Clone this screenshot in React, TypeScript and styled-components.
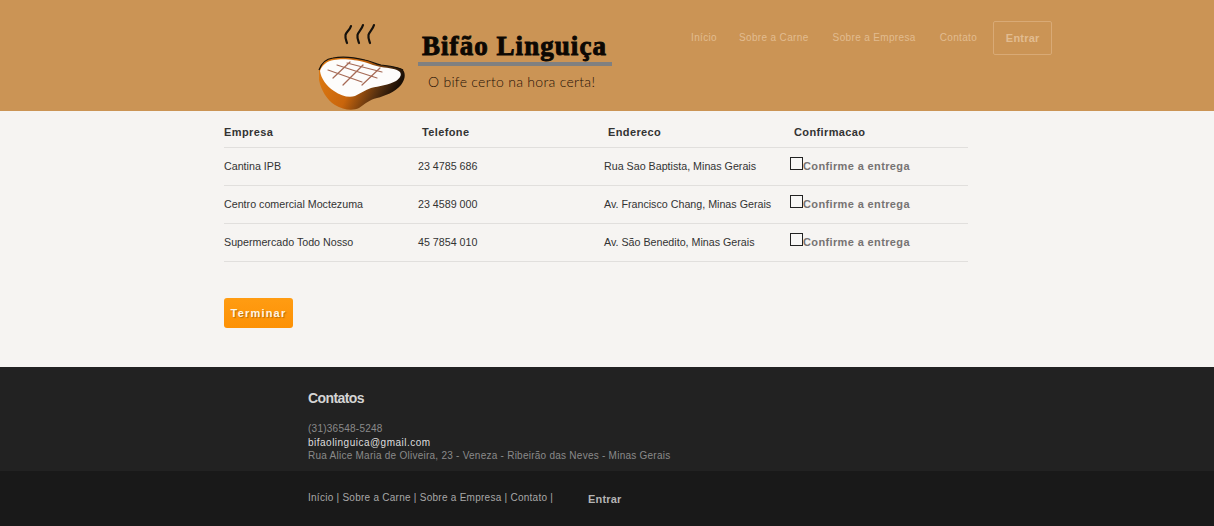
import React from 'react';
import styled, { createGlobalStyle } from 'styled-components';

const GlobalStyle = createGlobalStyle`
  html, body {
    margin: 0;
    padding: 0;
    background: #f6f4f2;
    font-family: "Liberation Sans", Arial, sans-serif;
  }
`;

const Header = styled.header`
  display: flex;
  align-items: flex-start;
  height: 111px;
  padding-left: 315px;
  background: #cb9455;
  overflow: hidden;
`;

const Logo = styled.div`
  display: flex;
  width: 297px;
`;

const SteakIcon = styled.svg`
  flex: none;
  width: 100px;
  height: 92px;
  margin-top: 20px;
`;

const Brand = styled.div`
  display: flex;
  flex-direction: column;
  margin: 31px 0 0 3px;
  width: 194px;
`;

const BrandName = styled.div`
  padding-left: 4px;
  font-family: "Liberation Serif", "Times New Roman", serif;
  font-size: 27px;
  line-height: 30px;
  font-weight: 700;
  letter-spacing: 1.05px;
  white-space: nowrap;
  color: #0c0803;
  -webkit-text-stroke: 0.9px #0c0803;
`;

const BrandBar = styled.div`
  height: 4px;
  margin-top: 1px;
  background: #808080;
`;

const Tagline = styled.div`
  margin-top: 7px;
  padding-left: 10px;
  font-family: Lato, sans-serif;
  font-size: 14px;
  font-weight: 300;
  line-height: 17px;
  letter-spacing: 0.29px;
  white-space: nowrap;
  color: #1f1005;
`;

const Nav = styled.nav`
  display: flex;
  align-items: flex-start;
  margin: 21px 0 0 77px;
`;

const NavLink = styled.a`
  margin: 10px 24px 0 0;
  font-size: 10px;
  line-height: 13px;
  letter-spacing: 0.35px;
  white-space: nowrap;
  color: #e2bc90;

  &:first-child {
    margin: 10px 22px 0 2px;
  }
`;

const EnterButton = styled.a`
  box-sizing: border-box;
  width: 59px;
  height: 34px;
  margin-left: -8px;
  border: 1px solid #d9aa76;
  border-radius: 2px;
  font-size: 11px;
  font-weight: 700;
  line-height: 32px;
  letter-spacing: 0.2px;
  text-align: center;
  color: #e2bc90;
`;

const Main = styled.main`
  height: 256px;
  padding-left: 224px;
  background: #f6f4f2;
`;

const Table = styled.table`
  width: 744px;
  border-collapse: collapse;
  table-layout: fixed;
`;

const HeadCell = styled.th<{ $indent?: boolean; $width: number }>`
  width: ${(p) => p.$width}px;
  height: 36px;
  padding: 6px 0 0 ${(p) => (p.$indent ? 4 : 0)}px;
  box-sizing: border-box;
  border-bottom: 1px solid #e1dfdd;
  font-size: 11px;
  font-weight: 700;
  letter-spacing: 0.38px;
  text-align: left;
  color: #333;
`;

const Cell = styled.td`
  height: 38px;
  padding: 0;
  box-sizing: border-box;
  border-bottom: 1px solid #e1dfdd;
  font-size: 10.7px;
  white-space: nowrap;
  color: #333;
`;

const ConfirmLabel = styled.label`
  display: flex;
  align-items: flex-start;
  font-size: 11px;
  font-weight: 700;
  letter-spacing: 0.37px;
  line-height: 13px;
  color: #777373;
`;

const CheckBox = styled.input`
  appearance: none;
  flex: none;
  width: 13px;
  height: 13px;
  margin: -3px 0 0;
  border: 1px solid #222;
  background: #f8f7f6;
`;

const FinishButton = styled.button`
  display: block;
  width: 69px;
  height: 30px;
  margin-top: 36px;
  padding: 0;
  border: 0;
  border-radius: 3px;
  background: linear-gradient(#ff9c12, #fd9105);
  font-family: inherit;
  font-size: 11px;
  font-weight: 700;
  letter-spacing: 1.2px;
  color: #fff6e6;
  text-shadow: 1px 1px 1px rgba(120, 70, 0, 0.5);
`;

const FooterTop = styled.section`
  height: 104px;
  padding-left: 308px;
  background: #222222;
  overflow: hidden;
`;

const FooterTitle = styled.h3`
  margin: 23px 0 16px;
  font-size: 14px;
  line-height: 16px;
  font-weight: 700;
  letter-spacing: -0.6px;
  color: #d4d4d4;
`;

const ContactLine = styled.div<{ $light?: boolean }>`
  font-size: 10px;
  line-height: 13.5px;
  letter-spacing: ${(p) => (p.$light ? '0.49px' : '0.25px')};
  color: ${(p) => (p.$light ? '#dedede' : '#8a8a8a')};
`;

const FooterBottom = styled.section`
  display: flex;
  align-items: flex-start;
  height: 55px;
  padding-left: 308px;
  background: #191919;
`;

const FooterLinks = styled.div`
  width: 280px;
  margin-top: 20px;
  font-size: 10px;
  line-height: 13px;
  letter-spacing: 0.26px;
  color: #a8a8a8;
`;

const FooterEnter = styled.a`
  margin-top: 21px;
  font-size: 11px;
  line-height: 14px;
  font-weight: 700;
  letter-spacing: 0.2px;
  color: #b4b4b4;
`;

const deliveries = [
  { company: 'Cantina IPB', phone: '23 4785 686', address: 'Rua Sao Baptista, Minas Gerais' },
  { company: 'Centro comercial Moctezuma', phone: '23 4589 000', address: 'Av. Francisco Chang, Minas Gerais' },
  { company: 'Supermercado Todo Nosso', phone: '45 7854 010', address: 'Av. São Benedito, Minas Gerais' },
];

function Steak() {
  return (
    <SteakIcon viewBox="0 0 100 92">
      <defs>
        <linearGradient id="meat" x1="0" y1="0" x2="1" y2="0.3">
          <stop offset="0" stopColor="#e07d12" />
          <stop offset="0.5" stopColor="#c9650c" />
          <stop offset="0.8" stopColor="#5a3210" />
          <stop offset="1" stopColor="#1a0f06" />
        </linearGradient>
      </defs>
      <g fill="none" stroke="#15110c" strokeWidth="2.2" strokeLinecap="round">
        <path d="M36 6C35 10 31 12 30.5 15C30 18 31 20 32 23" />
        <path d="M48 5C47 9 43 12 42.5 15C42 18 43 20 44 23" />
        <path d="M59 5C58 9 54 12 53.5 15C53 18 54 20 55 23" />
      </g>
      <path
        d="M4 50C6 44 10 39 18 38C28 36 42 38 50 40C56 41 60 44 66 45C74 46 84 47 88 50C91 54 90 60 86 65C80 72 70 76 62 78C54 80 50 84 44 88C38 91 28 90 20 85C12 80 6 70 4 60Z"
        fill="url(#meat)"
      />
      <path
        d="M4 50C6 44 10 39 18 38C28 36 42 38 50 40C56 41 60 44 66 45C74 46 84 47 88 50"
        fill="none"
        stroke="#15100a"
        strokeWidth="1.2"
      />
      <path
        d="M5 51C7 45 12 41 19 40C28 38 42 40 49 42C56 44 60 46 66 47C74 48 82 49 85 52C87 55 85 58 81 61C74 65 64 66 56 68C50 70 46 73 40 76C34 78 26 76 19 71C11 66 6 58 5 51Z"
        fill="#fdfcfb"
      />
      <g fill="none" stroke="#a66a55" strokeWidth="1.2" strokeLinecap="round">
        <path d="M13 50L47 62" />
        <path d="M22 45L62 58" />
        <path d="M32 43L67 52" />
        <path d="M35 42L18 58" />
        <path d="M48 45L28 65" />
        <path d="M65 48L47 65" />
      </g>
    </SteakIcon>
  );
}

function App() {
  return (
    <>
      <GlobalStyle />
      <Header>
        <Logo>
          <Steak />
          <Brand>
            <BrandName>Bifão Linguiça</BrandName>
            <BrandBar />
            <Tagline>O bife certo na hora certa!</Tagline>
          </Brand>
        </Logo>
        <Nav>
          <NavLink>Início</NavLink>
          <NavLink>Sobre a Carne</NavLink>
          <NavLink>Sobre a Empresa</NavLink>
          <NavLink>Contato</NavLink>
          <EnterButton>Entrar</EnterButton>
        </Nav>
      </Header>
      <Main>
        <Table>
          <thead>
            <tr>
              <HeadCell $width={194}>Empresa</HeadCell>
              <HeadCell $width={186} $indent>Telefone</HeadCell>
              <HeadCell $width={186} $indent>Endereco</HeadCell>
              <HeadCell $width={178} $indent>Confirmacao</HeadCell>
            </tr>
          </thead>
          <tbody>
            {deliveries.map((item) => (
              <tr key={item.company}>
                <Cell>{item.company}</Cell>
                <Cell>{item.phone}</Cell>
                <Cell>{item.address}</Cell>
                <Cell>
                  <ConfirmLabel>
                    <CheckBox type="checkbox" />
                    Confirme a entrega
                  </ConfirmLabel>
                </Cell>
              </tr>
            ))}
          </tbody>
        </Table>
        <FinishButton>Terminar</FinishButton>
      </Main>
      <FooterTop>
        <FooterTitle>Contatos</FooterTitle>
        <ContactLine>(31)36548-5248</ContactLine>
        <ContactLine $light>bifaolinguica@gmail.com</ContactLine>
        <ContactLine>Rua Alice Maria de Oliveira, 23 - Veneza - Ribeirão das Neves - Minas Gerais</ContactLine>
      </FooterTop>
      <FooterBottom>
        <FooterLinks>Início | Sobre a Carne | Sobre a Empresa | Contato |</FooterLinks>
        <FooterEnter>Entrar</FooterEnter>
      </FooterBottom>
    </>
  );
}

export default App;
